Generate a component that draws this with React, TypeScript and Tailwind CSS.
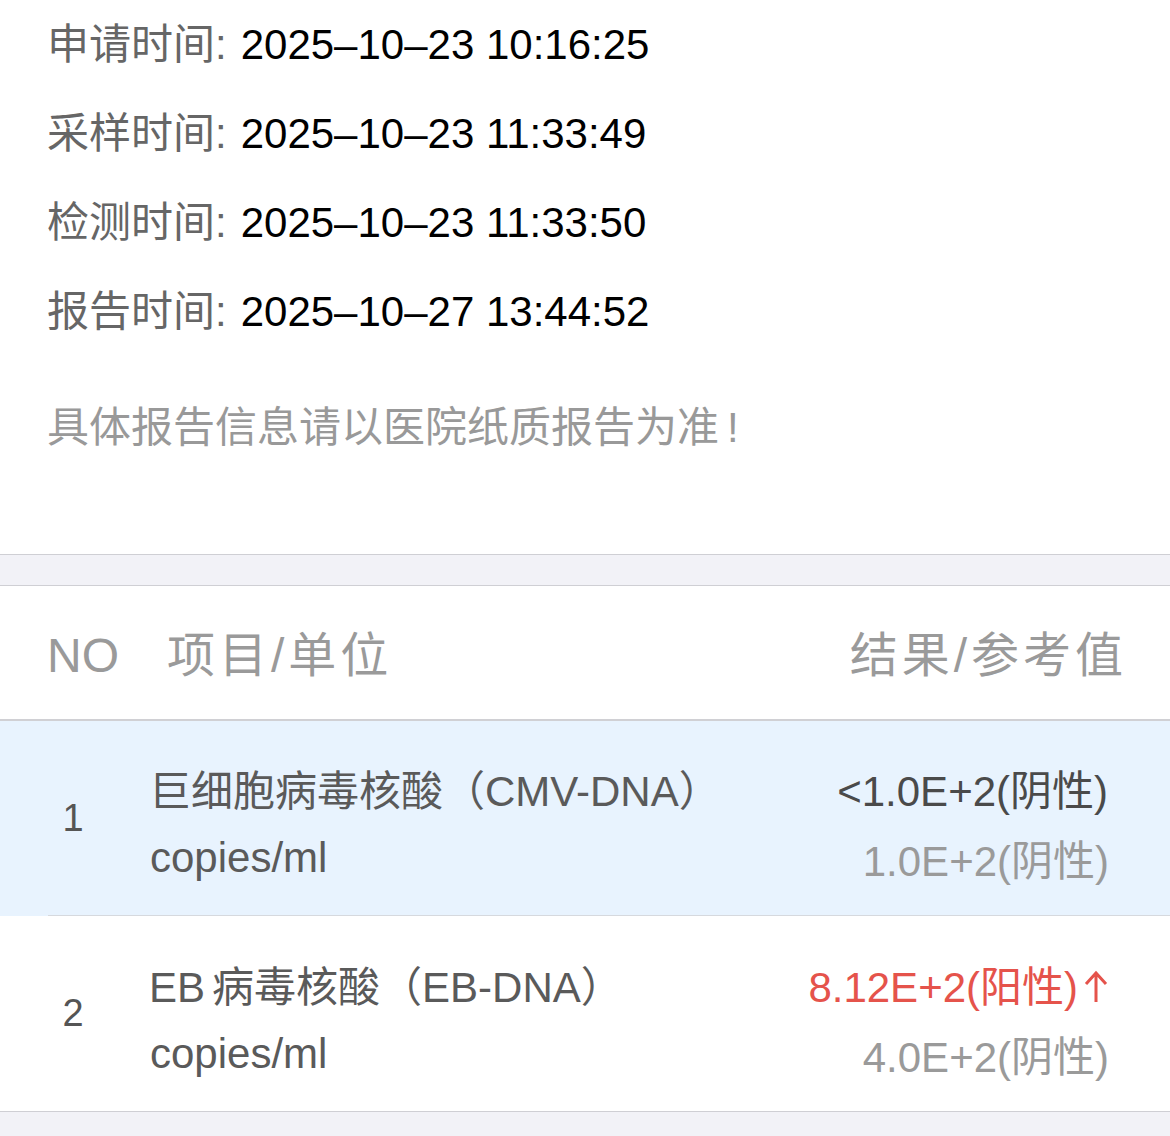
const font = { fontFamily: '"Liberation Sans", "Noto Sans CJK SC", sans-serif' };

const times = [
    ["申请时间", "2025–10–23 10:16:25"],
    ["采样时间", "2025–10–23 11:33:49"],
    ["检测时间", "2025–10–23 11:33:50"],
    ["报告时间", "2025–10–27 13:44:52"],
];

function UpArrow() {
    return (
        <svg width="24" height="34" viewBox="0 0 24 34" className="ml-[6px] inline-block align-[-2px]">
            <path d="M12 3 L12 32 M2 14 L12 3 L22 14" fill="none" stroke="currentColor" strokeWidth="3" />
        </svg>
    );
}

const rows = [
    {
        no: "1",
        name: <>巨细胞病毒核酸（CMV-DNA）</>,
        unit: "copies/ml",
        result: <>&lt;1.0E+2(阴性)</>,
        ref: "1.0E+2(阴性)",
        high: false,
    },
    {
        no: "2",
        name: (
            <>
                EB<span className="ml-[7px]">病毒核酸（EB-DNA）</span>
            </>
        ),
        unit: "copies/ml",
        result: (
            <>
                8.12E+2(阳性)
                <UpArrow />
            </>
        ),
        ref: "4.0E+2(阴性)",
        high: true,
    },
];

export default function App() {
    return (
        <div className="w-[1170px] h-[1136px] bg-white overflow-hidden" style={font}>
            <section className="px-[47px]">
                {times.map(([label, value]) => (
                    <div key={label} className="h-[89px] flex items-center text-[42px] leading-none">
                        <span className="text-[#666666]">{label}:</span>
                        <span className="ml-[14px] text-black">{value}</span>
                    </div>
                ))}
                <p className="mt-[42px] text-[42px] leading-[60px] text-[#999999]">
                    具体报告信息请以医院纸质报告为准<span className="ml-[8px]">!</span>
                </p>
            </section>

            <div className="mt-[96px] h-[32px] bg-[#f2f2f7] border-y border-[#cfcfd4]" />

            <div className="h-[135px] flex items-center px-[47px] pt-[6px] border-b-2 border-[#d0d0d4] text-[48px] text-[#9a9a9a] leading-none">
                <span className="w-[120px]">NO</span>
                <span className="tracking-[4px]">项目/单位</span>
                <span className="ml-auto tracking-[4px] -mr-[4px]">结果/参考值</span>
            </div>

            {rows.map((r, i) => (
                <div key={r.no} className={i === 0 ? "bg-[#e8f3fe]" : "bg-white"}>
                    <div
                        className={
                            i === 0
                                ? "h-[195px] flex items-center ml-[48px] border-b border-[#d6d9de]"
                                : "h-[195px] flex items-center ml-[48px]"
                        }
                    >
                        <div className="w-[50px] text-center text-[38px] text-[#555555]">{r.no}</div>
                        <div className="ml-[54px] pt-[14px] flex flex-col gap-[18px] text-[42px] leading-[48px] text-[#5a5a5a]">
                            <span className="-ml-[3px]">{r.name}</span>
                            <span className="-ml-[2px]">{r.unit}</span>
                        </div>
                        <div className="ml-auto pr-[62px] pt-[18px] flex flex-col items-end gap-[22px] text-[42px] leading-[48px]">
                            <span className={r.high ? "text-[#e5534b]" : "text-[#4a4a4a]"}>{r.result}</span>
                            <span className="text-[#9a9a9a] mr-[-1px]">{r.ref}</span>
                        </div>
                    </div>
                </div>
            ))}

            <div className="h-[26px] bg-[#f2f2f7] border-t border-[#cfcfd4]" />
        </div>
    );
}
